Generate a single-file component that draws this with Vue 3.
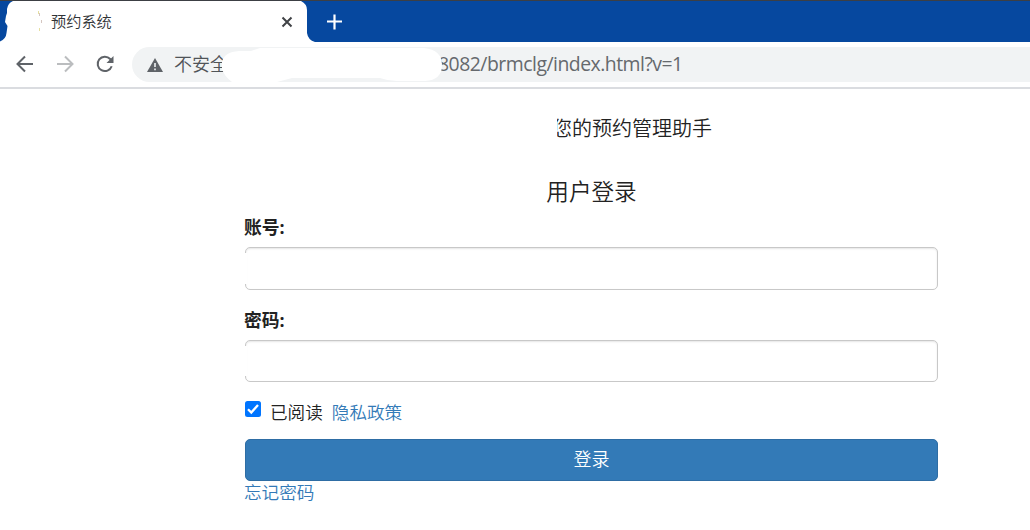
<script setup>
import { ref } from 'vue'

const account = ref('')
const password = ref('')
const agreed = ref(true)
</script>

<template>
  <div class="window">
    <header class="tabs">
      <svg class="tab-shape" width="330" height="42" viewBox="0 0 330 42" aria-hidden="true">
        <path fill="#fff" d="M0 42V41.500Q6 39 6.500 33L7.500 26 5 22 6 16 7 13V9Q8 3 13 1H301Q307 4 307 10V33Q308 40 315 42Z" />
        <path d="M38.500 11v3M39.500 28v3" stroke="#e6dfa0" fill="none" />
        <path d="M39.500 13v3M41.500 20v3" stroke="#d5c6c0" fill="none" />
      </svg>
      <span class="tab-title">预约系统</span>
      <svg class="tab-close" width="12" height="12" viewBox="0 0 12 12"><path d="M1.500 1.500l9 9M10.500 1.500l-9 9" stroke="#404246" stroke-width="2" fill="none" /></svg>
      <svg class="tab-new" width="16" height="16" viewBox="0 0 16 16"><path d="M8.500 .5v15M1 7.500h15" stroke="#fff" stroke-width="2.200" fill="none" /></svg>
    </header>
    <nav class="toolbar">
      <svg class="nav-icon" width="18" height="18" viewBox="0 0 18 18"><path d="M17 9H2M9 1.500L1.500 9 9 16.500" stroke="#5f6368" stroke-width="2" fill="none" /></svg>
      <svg class="nav-icon" width="18" height="18" viewBox="0 0 18 18"><path d="M1 9h15M9 1.500L16.500 9 9 16.500" stroke="#bbbdbf" stroke-width="2" fill="none" /></svg>
      <svg class="nav-icon" width="18" height="18" viewBox="0 0 18 18"><path d="M15.700 11.200A7.200 7.200 0 1 1 14.200 4L16 6" stroke="#5f6368" stroke-width="2" fill="none" /><path d="M17.500 1v7h-7z" fill="#5f6368" /></svg>
      <div class="address">
        <svg class="warning" width="16" height="14" viewBox="0 0 16 14"><path d="M8 0l8 14H0z" fill="#5f6368" /><path d="M8 5v4M8 10.500v1.700" stroke="#f1f3f4" stroke-width="1.600" /></svg>
        <span class="unsafe">不安全</span>
        <span class="url">8082/brmclg/index.html?v=1</span>
        <svg class="redaction" width="220" height="35" viewBox="0 0 220 35"><path fill="#fff" d="M0 15Q2 5 17 4H29L38 1H202Q220 3 220 18T203 34H175Q166 34 158 31H70L55 35H10Q2 29 0 22Z" /></svg>
      </div>
    </nav>
    <main class="page">
      <h1 class="slogan">您的预约管理助手</h1>
      <form class="login" @submit.prevent>
        <h2>用户登录</h2>
        <label class="field-label" for="account">账号:</label>
        <div class="field first"><input id="account" v-model="account" type="text" /></div>
        <label class="field-label second" for="password">密码:</label>
        <div class="field"><input id="password" v-model="password" type="password" /></div>
        <div class="consent">
          <label class="check">
            <input v-model="agreed" type="checkbox" />
            <svg width="16" height="16" viewBox="0 0 16 16"><rect width="16" height="16" rx="2.500" fill="#0075ff" /><path v-if="agreed" d="M3 8.300l3.300 3.300L13 4" stroke="#fff" stroke-width="2.300" fill="none" /></svg>
            <span>已阅读</span>
          </label>
          <a>隐私政策</a>
        </div>
        <button type="submit">登录</button>
        <a class="forgot">忘记密码</a>
      </form>
    </main>
  </div>
</template>

<style>
body { margin: 0; background: #fff; }
</style>

<style scoped>
* { box-sizing: border-box; }
.window { width: 1030px; height: 530px; overflow: hidden; background: #fff; color: #222; font-family: "Noto Sans CJK SC DemiLight", "Noto Sans CJK SC", sans-serif; font-weight: 350; }
.tabs { position: relative; display: flex; align-items: center; height: 42px; background: #06489f; border-top: 1px solid #3c3f44; }
.tab-shape { position: absolute; left: 0; top: -1px; }
.tab-title { position: relative; width: 230px; margin: -3px 0 0 51px; font-size: 15.2px; line-height: 22px; color: #303336; }
.tab-close { position: relative; }
.tab-new { margin-left: 33px; }
.toolbar { display: flex; align-items: center; height: 47px; padding: 0 0 1px 16px; border-bottom: 2px solid #dadce0; }
.nav-icon { flex: none; margin-right: 22px; }
.address { position: relative; flex: 1; display: flex; align-items: center; height: 35px; margin-left: -4px; background: #f1f3f4; border-radius: 18px 0 0 18px; }
.warning { margin-left: 15px; margin-top: 1px; }
.unsafe { width: 262px; margin-left: 11px; margin-top: -2px; font-size: 18px; color: #505458; }
.url { margin: -2px 0 0 2px; font-family: "Open Sans", sans-serif; font-weight: 370; font-size: 19.4px; letter-spacing: -.5px; white-space: nowrap; color: #65696d; }
.redaction { position: absolute; left: 90px; top: 0; }
.page { width: 693px; margin-left: 245px; padding-top: 24px; }
.slogan { position: relative; width: 160px; margin: 0 0 0 307px; font-size: 20px; line-height: 30px; font-weight: 350; white-space: nowrap; }
.slogan::before { content: ""; position: absolute; left: 0; top: 0; width: 5px; height: 30px; background: #fff; }
.login { display: flex; flex-direction: column; }
h2 { margin: 32px 0 0; font-size: 22.6px; line-height: 32px; font-weight: 350; text-align: center; }
.field-label { height: 24px; margin-top: 8px; margin-left: -1px; font-family: "Open Sans", "Noto Sans CJK SC", sans-serif; font-size: 17.8px; line-height: 24px; font-weight: 700; }
.second { margin-top: 18px; }
.field { position: relative; height: 42px; margin-top: 8px; }
.first { height: 43px; }
.field::before { content: ""; position: absolute; left: 0; top: 6px; bottom: 6px; width: 2px; background: #fff; }
.field input { display: block; width: 100%; height: 100%; padding: 6px 12px; border: 1px solid #c8c8c8; border-radius: 5px; box-shadow: inset 0 1px 2px rgba(0, 0, 0, .1); background: #fff; font-size: 18px; outline: 0; }
.consent { display: flex; align-items: center; height: 26px; margin-top: 17px; font-size: 17.6px; line-height: 26px; }
.check { display: flex; align-items: center; margin-right: 9px; }
.check input { position: absolute; opacity: 0; }
.check svg { margin: -7px 9px 0 0; }
a { color: #337ab7; }
button { height: 42px; margin-top: 14px; padding: 0 0 3px; border: 1px solid #2e6da4; border-radius: 5px; background: #337ab7; color: #fff; font: 350 18px/37px "Noto Sans CJK SC DemiLight", "Noto Sans CJK SC", sans-serif; }
.forgot { margin-top: -1px; margin-left: -1px; font-size: 17.6px; line-height: 24px; }
</style>
